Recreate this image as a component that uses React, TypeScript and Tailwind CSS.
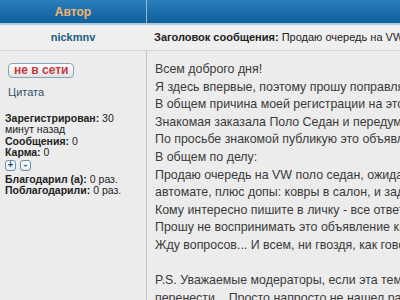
import React from 'react';

const lines = [
  'Всем доброго дня!',
  'Я здесь впервые, поэтому прошу поправлять, если что не так.',
  'В общем причина моей регистрации на этом форуме такова:',
  'Знакомая заказала Поло Седан и передумала его брать.',
  'По просьбе знакомой публикую это объявление.',
  'В общем по делу:',
  'Продаю очередь на VW поло седан, ожидаемая поставка в',
  'автомате, плюс допы: ковры в салон, и задние брызговики.',
  'Кому интересно пишите в личку - все ответы там.',
  'Прошу не воспринимать это объявление как спам.',
  'Жду вопросов... И всем, ни гвоздя, как говорится.',
  '',
  'P.S. Уважаемые модераторы, если эта тема не там, прошу',
  'перенести... Просто напросто не нашел раздела.',
];

function Stat({ label, value }: { label: string; value: React.ReactNode }) {
  return (
    <div>
      <span className="font-bold">{label}</span> {value}
    </div>
  );
}

export default function App() {
  return (
    <div
      className="w-[400px] h-[300px] overflow-hidden bg-[#ececec] text-[#333]"
      style={{ fontFamily: '"Liberation Sans", Tahoma, Arial, sans-serif' }}
    >
      {/* header */}
      <div className="flex h-[25px] bg-gradient-to-b from-[#2a7fbd] to-[#0f5f99] border-b-2 border-[#a9cbe3]">
        <div className="w-[146px] shrink-0 flex items-center justify-center text-[12px] font-bold text-[#f2b56f]">
          Автор
        </div>
        <div className="w-px bg-[#8fbbdd]" />
        <div className="flex-1" />
      </div>

      {/* author / subject row */}
      <div className="flex h-[26px] bg-[#efefef] border-b border-[#cfd4d8]">
        <div className="w-[146px] shrink-0 flex items-center justify-center text-[11px] font-bold text-[#1d5c7e]">
          nickmnv
        </div>
        <div className="w-px bg-[#d4d4d4]" />
        <div className="flex-1 flex items-center pl-[8px] text-[11px] whitespace-nowrap text-[#222]">
          <span className="font-bold">Заголовок сообщения:</span>&nbsp;Продаю очередь на VW поло седан
        </div>
      </div>

      {/* body */}
      <div className="flex h-full">
        <div className="w-[146px] shrink-0 pl-[5px] pt-[12px] text-[10.5px] leading-[11.5px] text-[#222]">
          <div className="ml-[3px] inline-flex items-center h-[15px] px-[5px] rounded-[4px] border border-[#8ea2b4] bg-gradient-to-b from-white to-[#dde3e8] text-[12px] font-bold text-[#c83a3a]">
            не в сети
          </div>
          <div className="ml-[3px] mt-[9px] text-[11px] text-[#31516b]">Цитата</div>
          <div className="mt-[14px]">
            <Stat label="Зарегистрирован:" value={<>30<br />минут назад</>} />
            <Stat label="Сообщения:" value="0" />
            <Stat label="Карма:" value="0" />
            <div className="flex gap-[4px] mt-[1px] mb-[3px]">
              <div className="w-[11px] h-[11px] rounded-[3px] border border-[#6f8eb0] bg-gradient-to-b from-white to-[#e4ebf2] flex items-center justify-center text-[10px] font-bold leading-none text-[#1b4f86]">+</div>
              <div className="w-[11px] h-[11px] rounded-[3px] border border-[#6f8eb0] bg-gradient-to-b from-white to-[#e4ebf2] flex items-center justify-center text-[10px] font-bold leading-none text-[#1b4f86]">-</div>
            </div>
            <Stat label="Благодарил (а):" value="0 раз." />
            <Stat label="Поблагодарили:" value="0 раз." />
          </div>
        </div>
        <div className="w-[2px] border-l border-[#c6c6c6] bg-[#e2e2e2]" />
        <div className="flex-1 pl-[8px] pt-[10px] text-[12.4px] leading-[17.6px] text-[#3a3a3a] whitespace-nowrap">
          {lines.map((l, i) => (
            <div key={i} className="h-[17.6px]">{l}</div>
          ))}
        </div>
      </div>
    </div>
  );
}
